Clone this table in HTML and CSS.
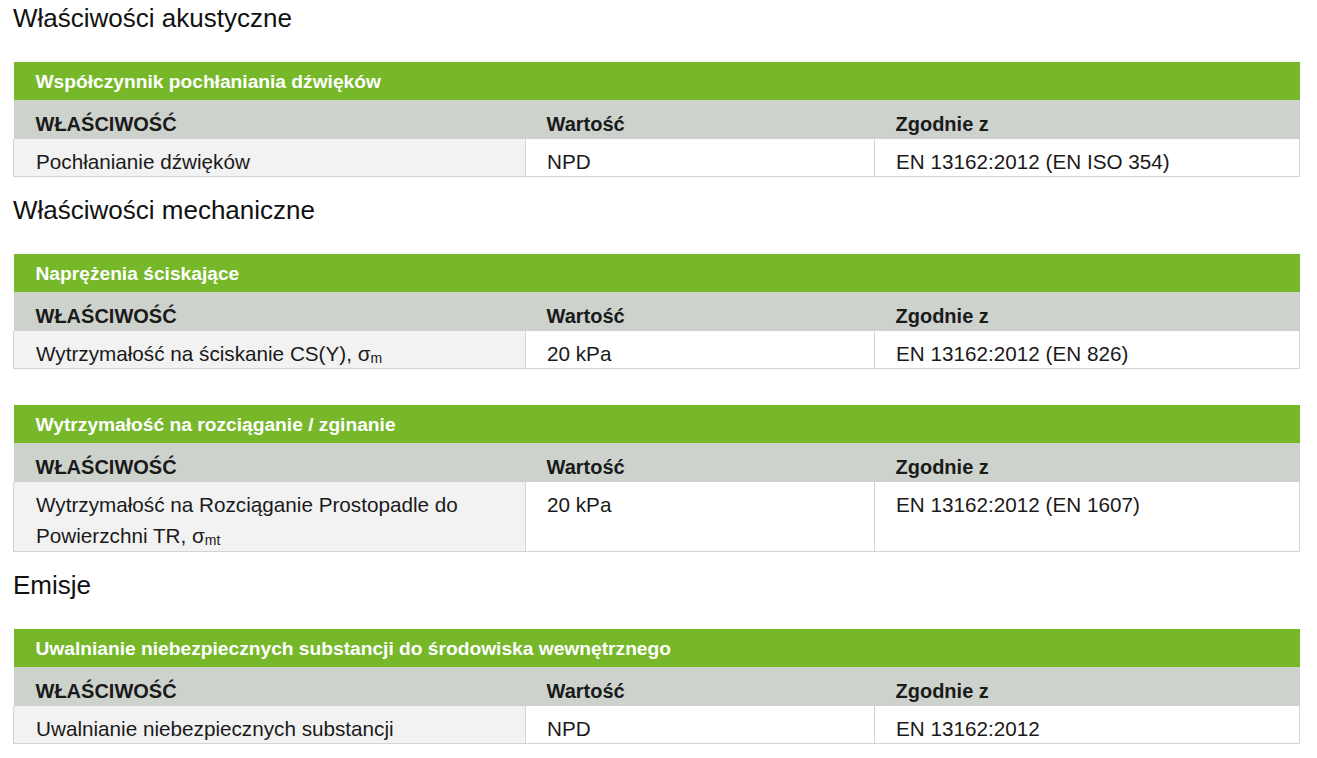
FILE: index.html
```html
<!DOCTYPE html>
<html lang="pl">
<head>
<meta charset="utf-8">
<title>Właściwości</title>
<link rel="stylesheet" href="styles.css">
</head>
<body>
<main class="page">
  <h2 class="section-title first">Właściwości akustyczne</h2>
  <table class="spec">
    <colgroup><col class="c1"><col class="c2"><col class="c3"></colgroup>
    <thead>
      <tr class="title-row"><th colspan="3">Współczynnik pochłaniania dźwięków</th></tr>
      <tr class="head-row"><th>WŁAŚCIWOŚĆ</th><th>Wartość</th><th>Zgodnie z</th></tr>
    </thead>
    <tbody>
      <tr><td class="prop">Pochłanianie dźwięków</td><td>NPD</td><td>EN 13162:2012 (EN ISO 354)</td></tr>
    </tbody>
  </table>

  <h2 class="section-title">Właściwości mechaniczne</h2>
  <table class="spec">
    <colgroup><col class="c1"><col class="c2"><col class="c3"></colgroup>
    <thead>
      <tr class="title-row"><th colspan="3">Naprężenia ściskające</th></tr>
      <tr class="head-row"><th>WŁAŚCIWOŚĆ</th><th>Wartość</th><th>Zgodnie z</th></tr>
    </thead>
    <tbody>
      <tr><td class="prop">Wytrzymałość na ściskanie CS(Y), σ<sub>m</sub></td><td>20 kPa</td><td>EN 13162:2012 (EN 826)</td></tr>
    </tbody>
  </table>
  <table class="spec">
    <colgroup><col class="c1"><col class="c2"><col class="c3"></colgroup>
    <thead>
      <tr class="title-row"><th colspan="3">Wytrzymałość na rozciąganie / zginanie</th></tr>
      <tr class="head-row"><th>WŁAŚCIWOŚĆ</th><th>Wartość</th><th>Zgodnie z</th></tr>
    </thead>
    <tbody>
      <tr><td class="prop two-line">Wytrzymałość na Rozciąganie Prostopadle do Powierzchni TR, σ<sub>mt</sub></td><td>20 kPa</td><td>EN 13162:2012 (EN 1607)</td></tr>
    </tbody>
  </table>

  <h2 class="section-title">Emisje</h2>
  <table class="spec">
    <colgroup><col class="c1"><col class="c2"><col class="c3"></colgroup>
    <thead>
      <tr class="title-row"><th colspan="3">Uwalnianie niebezpiecznych substancji do środowiska wewnętrznego</th></tr>
      <tr class="head-row"><th>WŁAŚCIWOŚĆ</th><th>Wartość</th><th>Zgodnie z</th></tr>
    </thead>
    <tbody>
      <tr><td class="prop">Uwalnianie niebezpiecznych substancji</td><td>NPD</td><td>EN 13162:2012</td></tr>
    </tbody>
  </table>
</main>
</body>
</html>
```

FILE: styles.css
```css
html, body {
  margin: 0;
  padding: 0;
  background: #ffffff;
}
body {
  font-family: "Liberation Sans", Arial, sans-serif;
  color: #1a1a1a;
}
.page {
  padding: 0 0 0 13px;
  width: 1286px;
}
.section-title {
  margin: 18px 0 29px;
  font-size: 26px;
  line-height: 30px;
  font-weight: normal;
  color: #111;
}
.section-title.first {
  margin-top: 3px;
}
.spec {
  width: 1286px;
  border-collapse: collapse;
  table-layout: fixed;
  font-size: 20.7px;
}
.spec + .spec {
  margin-top: 36px;
}
.c1 { width: 512px; }
.c2 { width: 349px; }
.c3 { width: 425px; }
.title-row th {
  background: #76b82a;
  color: #ffffff;
  text-align: left;
  font-weight: bold;
  font-size: 19.2px;
  padding: 6px 22px 4px;
  line-height: 28px;
}
.head-row th {
  background: #cdd2cd;
  text-align: left;
  font-weight: bold;
  font-size: 20px;
  padding: 10px 21px 0;
  line-height: 29px;
  color: #1a1a1a;
}
.spec td {
  border: 1px solid #d4d4d4;
  border-top: none;
  padding: 8px 21px 0;
  line-height: 29px;
  vertical-align: top;
  background: #ffffff;
}
.spec td.prop {
  background: #f2f2f2;
}
.spec td.two-line {
  line-height: 31px;
  padding-top: 7px;
}
.spec th:first-child,
.spec td:first-child {
  padding-left: 22px;
}
sub {
  font-size: 14px;
  vertical-align: -2px;
  line-height: 0;
}
```
